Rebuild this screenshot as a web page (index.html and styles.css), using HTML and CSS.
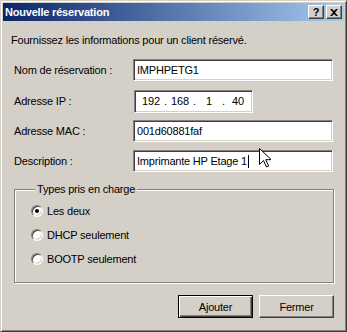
FILE: index.html
```html
<!DOCTYPE html>
<html lang="fr">
<head>
    <meta charset="UTF-8">
    <title>Nouvelle réservation</title>
    <link rel="stylesheet" href="styles.css">
</head>
<body>
    <div class="window">
        <div class="titlebar">
            <span class="title">Nouvelle réservation</span>
            <div class="caption-buttons">
                <span class="cap-btn">?</span>
                <span class="cap-btn">
                    <svg width="8" height="7" viewBox="0 0 8 7"><path d="M0 0h2l2 2 2-2h2L5 3.5 8 7H6L4 5 2 7H0l3-3.5z" fill="#000"/></svg>
                </span>
            </div>
        </div>

        <div class="content">
            <p class="intro">Fournissez les informations pour un client réservé.</p>

            <div class="form">
                <div class="row">
                    <span class="label">Nom de réservation :</span>
                    <div class="field">IMPHPETG1</div>
                </div>
                <div class="row row-ip">
                    <span class="label">Adresse IP :</span>
                    <div class="field ip">
                        <span class="octet">192</span><span class="sep">.</span><span class="octet">168</span><span class="sep">.</span><span class="octet">1</span><span class="sep">.</span><span class="octet">40</span>
                    </div>
                </div>
                <div class="row">
                    <span class="label">Adresse MAC :</span>
                    <div class="field">001d60881faf</div>
                </div>
                <div class="row">
                    <span class="label">Description :</span>
                    <div class="field">Imprimante HP Etage 1<span class="caret"></span></div>
                </div>
            </div>

            <fieldset class="group">
                <legend>Types pris en charge</legend>
                <div class="radio"><span class="radio-box checked"></span>Les deux</div>
                <div class="radio"><span class="radio-box"></span>DHCP seulement</div>
                <div class="radio"><span class="radio-box"></span>BOOTP seulement</div>
            </fieldset>

            <div class="actions">
                <button class="btn default">Ajouter</button>
                <button class="btn">Fermer</button>
            </div>
        </div>

        <!-- pointeur de la souris -->
        <svg class="cursor" width="12" height="20" viewBox="0 0 12 20">
            <path d="M0.5 0.5v16l4-4 3 6.5 2.2-1-3-6.3h5.6z" fill="#fff" stroke="#000" stroke-width="1"/>
        </svg>
    </div>
</body>
</html>
```

FILE: styles.css
```css
* {
    box-sizing: border-box;
}

body {
    margin: 0;
    background: #404040;
    font-family: "Liberation Sans", Arial, sans-serif;
    font-size: 11px;
    letter-spacing: -0.2px;
    color: #000;
}

/* Fenetre style Windows 2000 */
.window {
    position: relative;
    width: 347px;
    height: 332px;
    background: #d4d0c8;
    border: 1px solid;
    border-color: #d4d0c8 #404040 #404040 #d4d0c8;
    box-shadow: inset 1px 1px #fff, inset -1px -1px #808080;
    padding: 2px;
}

.titlebar {
    height: 18px;
    display: flex;
    align-items: center;
    justify-content: space-between;
    padding-left: 2px;
    background: linear-gradient(to right, #0a246a, #a6caf0);
}

.title {
    color: #fff;
    font-weight: bold;
    font-size: 11px;
}

.caption-buttons {
    display: flex;
    gap: 2px;
    margin-right: 2px;
}

.cap-btn {
    width: 16px;
    height: 14px;
    display: flex;
    align-items: center;
    justify-content: center;
    background: #d4d0c8;
    border: 1px solid;
    border-color: #fff #404040 #404040 #fff;
    box-shadow: inset -1px -1px #808080;
    font-weight: bold;
    font-size: 11px;
    line-height: 1;
}

.content {
    padding: 0 10px 0 11px;
}

.intro {
    margin: 13px 0 0 -3px;
    line-height: 13px;
}

/* Lignes du formulaire */
.form {
    display: flex;
    flex-direction: column;
    gap: 8px;
    margin-top: 12px;
}

.row {
    display: flex;
    align-items: center;
    height: 22px;
}

.row-ip {
    margin-top: 1px;
}

.label {
    width: 119px;
}

.field {
    position: relative;
    width: 200px;
    height: 22px;
    background: #fff;
    border: 1px solid;
    border-color: #808080 #fff #fff #808080;
    box-shadow: inset 1px 1px #404040, inset -1px -1px #d4d0c8;
    padding: 0 3px;
    display: flex;
    align-items: center;
}

.ip {
    width: 119px;
    margin-left: 1px;
    height: 23px;
    padding-left: 5px;
}

.octet {
    width: 22px;
    text-align: center;
}

.sep {
    width: 7px;
    text-align: center;
}

.caret {
    width: 1px;
    height: 13px;
    margin-left: 1px;
    background: #000;
}

/* Groupe de boutons radio */
.group {
    margin: 11px 0 0;
    padding: 3px 0 0 16px;
    height: 100px;
    border: 1px solid #808080;
    box-shadow: inset 1px 1px #fff, 1px 1px #fff;
}

.group legend {
    padding: 0 2px;
    margin-left: 4px;
    line-height: 13px;
    background: #d4d0c8;
}

.radio {
    display: flex;
    align-items: center;
    height: 24px;
}

.radio-box {
    width: 12px;
    height: 12px;
    margin-right: 4px;
    border-radius: 50%;
    border: 1px solid;
    border-color: #808080 #fff #fff #808080;
    box-shadow: inset 1px 1px #404040, inset -1px -1px #d4d0c8;
    background: #fff;
    position: relative;
}

.radio-box.checked::after {
    content: "";
    position: absolute;
    left: 3px;
    top: 3px;
    width: 4px;
    height: 4px;
    border-radius: 50%;
    background: #000;
}

/* Boutons du bas */
.actions {
    display: flex;
    justify-content: flex-end;
    gap: 6px;
    margin-top: 12px;
}

.btn {
    width: 75px;
    height: 23px;
    font-family: inherit;
    font-size: 11px;
    letter-spacing: inherit;
    color: #000;
    background: #d4d0c8;
    border: 1px solid;
    border-color: #fff #404040 #404040 #fff;
    box-shadow: inset -1px -1px #808080;
    padding: 0;
}

.btn.default {
    border: 1px solid #000;
    box-shadow: inset 1px 1px #fff, inset -1px -1px #404040, inset -2px -2px #808080;
}

.cursor {
    position: absolute;
    left: 258px;
    top: 147px;
}
```
